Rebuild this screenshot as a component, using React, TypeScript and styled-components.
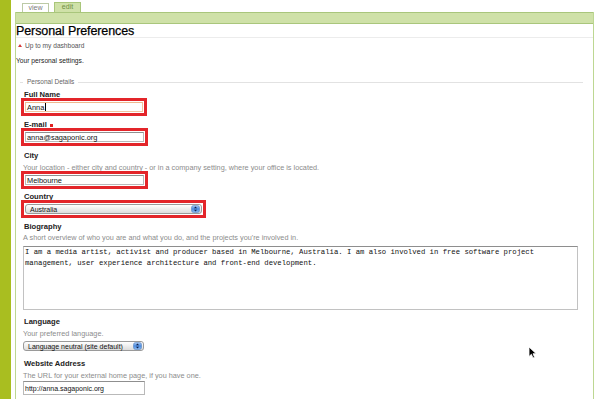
import React from "react";
import styled, { createGlobalStyle } from "styled-components";

const Global = createGlobalStyle`
  html, body { margin: 0; padding: 0; background: #fff; }
  body {
    font-family: "Liberation Sans", Arial, sans-serif;
    color: #222;
  }
`;

const Page = styled.div`
  position: relative;
  display: flex;
  width: 600px;
  height: 399px;
  overflow: hidden;
`;

const SideBar = styled.div`
  width: 11px;
  flex-shrink: 0;
  background: #a9be20;
`;

const Main = styled.div`
  flex: 1;
  display: flex;
  flex-direction: column;
  padding: 0 6px 0 4px;
`;

const TabRow = styled.div`
  height: 12px;
  display: flex;
  align-items: flex-end;
  gap: 5px;
  padding-left: 7px;
`;

const Tab = styled.div<{ $active?: boolean }>`
  width: 27px;
  height: ${(p) => (p.$active ? 10 : 9)}px;
  box-sizing: border-box;
  border: 1px solid ${(p) => (p.$active ? "#a9c67a" : "#bccaa6")};
  border-bottom: none;
  background: ${(p) => (p.$active ? "#cfe1a8" : "#fff")};
  color: ${(p) => (p.$active ? "#6f8f46" : "#7a7a7a")};
  font-size: 7px;
  line-height: 8px;
  text-align: center;
`;

const Panel = styled.div`
  flex: 1;
  display: flex;
  flex-direction: column;
  border-left: 1px solid #bdd792;
  border-right: 1px solid #bdd792;
`;

const Strip = styled.div`
  height: 10px;
  background: #cfe1a8;
  border-top: 1px solid #a9c67c;
  border-bottom: 1px solid #a9c67c;
`;

const Heading = styled.h1`
  margin: 0;
  height: 13px;
  font-size: 12.5px;
  line-height: 14px;
  font-weight: normal;
  color: #000;
  border-bottom: 1px solid #ececec;
  letter-spacing: -0.1px;
  -webkit-text-stroke: 0.25px #000;
`;

const UpLink = styled.div`
  margin-top: 3px;
  padding-left: 2px;
  display: flex;
  align-items: center;
  gap: 3px;
  height: 8px;
  font-size: 6.6px;
  color: #555;
`;

const UpArrow = styled.span`
  width: 0;
  height: 0;
  border-left: 2px solid transparent;
  border-right: 2px solid transparent;
  border-bottom: 3px solid #d23a3a;
`;

const Intro = styled.p`
  margin: 8px 0 0;
  height: 8px;
  line-height: 8px;
  font-size: 6.7px;
  color: #222;
`;

const Fieldset = styled.fieldset`
  margin: 13px 10px 0 4px;
  padding: 5px 3px 0;
  border: none;
  border-top: 1px solid #e2e2e2;
  min-width: 0;
`;

const Legend = styled.legend`
  padding: 0 4px;
  margin-left: 0;
  font-size: 6.5px;
  line-height: 8px;
  color: #666;
`;

const Field = styled.div<{ $gap: number }>`
  margin-top: ${(p) => p.$gap}px;
  display: flex;
  flex-direction: column;
  align-items: flex-start;
`;

const Label = styled.label`
  padding-left: 1px;
  height: 8px;
  line-height: 8px;
  font-size: 7.6px;
  font-weight: bold;
  color: #222;
  display: flex;
  align-items: center;
  gap: 3px;
`;

const Required = styled.span`
  width: 3px;
  height: 3px;
  background: #e02020;
`;

const Help = styled.div<{ $top?: number }>`
  margin-top: ${(p) => p.$top ?? 4}px;
  height: 8px;
  line-height: 8px;
  font-size: 7.3px;
  color: #8c8c8c;
  white-space: nowrap;
`;

const Highlight = styled.div<{ $w: number }>`
  margin: -1px 0 0 -2px;
  width: ${(p) => p.$w}px;
  box-sizing: border-box;
  border: 3px solid #e3252a;
  padding: 1px;
  display: flex;
`;

const TextBox = styled.div<{ $focus?: boolean; $w?: number; $h?: number; $top?: number; $size?: number }>`
  margin-top: ${(p) => p.$top ?? 0}px;
  width: ${(p) => (p.$w ? `${p.$w}px` : "100%")};
  height: ${(p) => p.$h ?? 10}px;
  box-sizing: border-box;
  border: 1px solid ${(p) => (p.$focus ? "#f2c4a0" : "#b9b9b9")};
  border-top-color: ${(p) => (p.$focus ? "#efb88e" : "#8f8f8f")};
  background: #fff;
  display: flex;
  align-items: center;
  padding-left: 1px;
  font-size: ${(p) => p.$size ?? 7.4}px;
  color: #111;
  white-space: nowrap;
`;

const Caret = styled.span`
  width: 1px;
  height: 8px;
  background: #000;
  margin-left: 0.5px;
`;

const SelectBox = styled.div<{ $w?: number; $top?: number }>`
  margin-top: ${(p) => p.$top ?? 0}px;
  width: ${(p) => (p.$w ? `${p.$w}px` : "100%")};
  height: 10px;
  box-sizing: border-box;
  border: 1px solid #9a9a9a;
  border-radius: 3px;
  background: linear-gradient(#ffffff, #ececec 55%, #dcdcdc);
  display: flex;
  align-items: center;
  justify-content: space-between;
  padding: 0 1px 0 4px;
  font-size: 7px;
  color: #111;
  white-space: nowrap;
`;

const Stepper = () => (
  <svg width="9" height="8" viewBox="0 0 9 8">
    <defs>
      <linearGradient id="stepg" x1="0" y1="0" x2="0" y2="1">
        <stop offset="0" stopColor="#a9c9f2" />
        <stop offset="0.5" stopColor="#4b8be0" />
        <stop offset="1" stopColor="#8fbcf0" />
      </linearGradient>
    </defs>
    <rect x="0.5" y="0.5" width="8" height="7" rx="2" fill="url(#stepg)" stroke="#4a78b8" strokeWidth="0.5" />
    <path d="M3 3.3 L4.5 1.6 L6 3.3 Z" fill="#10204a" />
    <path d="M3 4.7 L4.5 6.4 L6 4.7 Z" fill="#10204a" />
  </svg>
);

const TextArea = styled.div`
  margin-top: 4px;
  width: 555px;
  height: 64px;
  box-sizing: border-box;
  border: 1px solid #c2c2c2;
  border-top-color: #8e8e8e;
  padding: 0 1px;
  font-family: "Liberation Mono", "Courier New", monospace;
  font-size: 7.25px;
  line-height: 11px;
  color: #111;
  white-space: pre;
`;

const Cursor = styled.svg`
  position: absolute;
  left: 528px;
  top: 346px;
`;

export default function App() {
  return (
    <>
      <Global />
      <Page>
        <SideBar />
        <Main>
          <TabRow>
            <Tab>view</Tab>
            <Tab $active>edit</Tab>
          </TabRow>
          <Panel>
            <Strip />
            <Heading>Personal Preferences</Heading>
            <UpLink>
              <UpArrow />
              Up to my dashboard
            </UpLink>
            <Intro>Your personal settings.</Intro>
            <Fieldset>
              <Legend>Personal Details</Legend>
              <Field $gap={0}>
                <Label>Full Name</Label>
                <Highlight $w={126}>
                  <TextBox $focus>
                    Anna
                    <Caret />
                  </TextBox>
                </Highlight>
              </Field>
              <Field $gap={5}>
                <Label>
                  E-mail <Required />
                </Label>
                <Highlight $w={127}>
                  <TextBox>anna@sagaponic.org</TextBox>
                </Highlight>
              </Field>
              <Field $gap={6}>
                <Label>City</Label>
                <Help>
                  Your location - either city and country - or in a company setting, where your office is located.
                </Help>
                <Highlight $w={127}>
                  <TextBox>Melbourne</TextBox>
                </Highlight>
              </Field>
              <Field $gap={4}>
                <Label>Country</Label>
                <Highlight $w={185}>
                  <SelectBox>
                    Australia
                    <Stepper />
                  </SelectBox>
                </Highlight>
              </Field>
              <Field $gap={5}>
                <Label>Biography</Label>
                <Help $top={3}>
                  A short overview of who you are and what you do, and the projects you're involved in.
                </Help>
                <TextArea>
                  {
                    "I am a media artist, activist and producer based in Melbourne, Australia. I am also involved in free software project\nmanagement, user experience architecture and front-end development."
                  }
                </TextArea>
              </Field>
              <Field $gap={8}>
                <Label>Language</Label>
                <Help>Your preferred language.</Help>
                <SelectBox $w={121} $top={3}>
                  Language neutral (site default)
                  <Stepper />
                </SelectBox>
              </Field>
              <Field $gap={9}>
                <Label>Website Address</Label>
                <Help>The URL for your external home page, if you have one.</Help>
                <TextBox $w={122} $h={14} $top={1} $size={7}>
                  http://anna.sagaponic.org
                </TextBox>
              </Field>
            </Fieldset>
          </Panel>
        </Main>
        <Cursor width="9" height="13" viewBox="0 0 9 13">
          <path d="M1 1 L1 10.5 L3.4 8.3 L5 12 L6.6 11.3 L5 7.7 L8.2 7.7 Z" fill="#000" stroke="#fff" strokeWidth="0.8" />
        </Cursor>
      </Page>
    </>
  );
}
